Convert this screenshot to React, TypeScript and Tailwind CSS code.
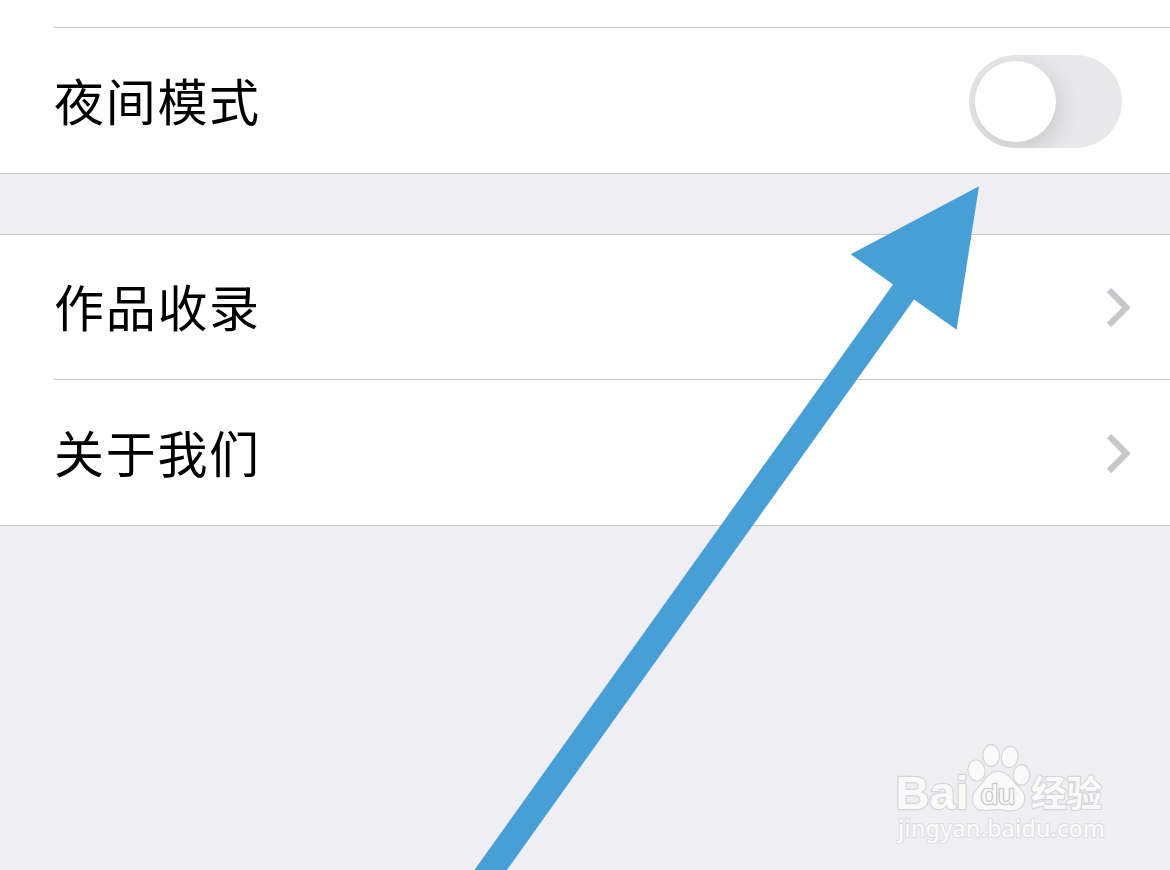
import type { ReactNode } from 'react';

function Chevron() {
  return (
    <svg className="mr-[38px] h-10 w-[26px]" viewBox="0 0 26 40" fill="none" aria-hidden="true">
      <path d="M3 2.1 20.4 19.5 3 36.9" stroke="#c7c7cc" strokeWidth="6.2" />
    </svg>
  );
}

function Toggle() {
  return (
    <button
      type="button"
      role="switch"
      aria-checked={false}
      className="mr-12 flex h-[93px] w-[153px] overflow-hidden rounded-full bg-[#e8e8ea] p-1.5"
    >
      <span className="size-[81px] rounded-full bg-white shadow-[3px_7px_24px_rgba(0,0,0,0.14)]" />
    </button>
  );
}

function Row({ label, className = '', children }: { label: string; className?: string; children: ReactNode }) {
  return (
    <div className={`flex h-[145px] items-center justify-between pl-[54px] ${className}`}>
      <span className="mb-1.5 text-[50px] leading-[72px] tracking-[1.7px] text-black">{label}</span>
      {children}
    </div>
  );
}

function Watermark() {
  return (
    <svg
      className="absolute left-[880px] top-[730px] h-[125px] w-[240px] overflow-visible"
      viewBox="0 0 240 125"
      aria-hidden="true"
    >
      <g fill="#fafafa" stroke="#d6d6da" strokeWidth="2.4" paintOrder="stroke" strokeLinejoin="round">
        <text x="15.5" y="79" fontFamily="Liberation Sans" fontWeight="700" fontSize="47" textLength="73" lengthAdjust="spacingAndGlyphs">Bai</text>
        <ellipse cx="96.5" cy="40.5" rx="7.9" ry="10" transform="rotate(-8 96.5 40.5)" />
        <ellipse cx="111.2" cy="25.5" rx="7.7" ry="10.3" />
        <ellipse cx="129.7" cy="27" rx="7.7" ry="10" transform="rotate(10 129.7 27)" />
        <ellipse cx="141.5" cy="45" rx="7.7" ry="9.7" />
        <path d="M118 42c-9 0-12 7-16 12-5 6-9 9-9 15 0 8 5 11 12 11 5 0 9-1 14-1 6 0 9 2 14 1 8-1 12-6 11-14-1-5-6-9-10-13-4-5-7-11-16-11Z" />
        <text x="101" y="74" stroke="#c9c9ce" strokeWidth="2.6" fontFamily="Liberation Sans" fontSize="28" textLength="34" lengthAdjust="spacingAndGlyphs">du</text>
        <text x="151" y="77" fontFamily="Noto Sans CJK SC" fontWeight="700" fontSize="36" textLength="71" lengthAdjust="spacingAndGlyphs">经验</text>
        <text x="18" y="107" stroke="#dddde1" strokeWidth="2" fontFamily="Noto Sans" fontWeight="500" fontSize="23" textLength="207" lengthAdjust="spacingAndGlyphs">jingyan.baidu.com</text>
      </g>
    </svg>
  );
}

export default function App() {
  return (
    <main
      lang="zh-CN"
      className="relative h-[870px] w-[1170px] overflow-hidden bg-[#eeeef3] font-['Noto_Sans_CJK_SC',sans-serif]"
    >
      <section className="border-b border-[#c8c7cc] bg-white">
        <div className="ml-[54px] h-7 border-b border-[#c8c7cc]" />
        <Row label="夜间模式" className="pt-0.5">
          <Toggle />
        </Row>
      </section>
      <section className="mt-[60px] border-y border-[#c8c7cc] bg-white">
        <div className="h-36">
          <Row label="作品收录">
            <Chevron />
          </Row>
        </div>
        <div className="ml-[54px] border-t border-[#c8c7cc]" />
        <Row label="关于我们" className="pt-0.5">
          <Chevron />
        </Row>
      </section>
      <svg className="absolute inset-0 h-[870px] w-[1170px]" viewBox="0 0 1170 870" aria-hidden="true">
        <path d="M979 186.2 850.7 254.3 893 284.4 474 870.5H506.5L914 299.6 956.6 329.8Z" fill="#489fd5" />
      </svg>
      <Watermark />
    </main>
  );
}
